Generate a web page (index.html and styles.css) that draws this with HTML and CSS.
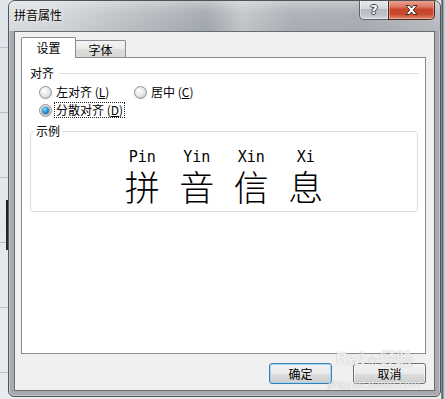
FILE: index.html
```html
<!DOCTYPE html>
<html lang="zh-CN">
<head>
<meta charset="utf-8">
<title>拼音属性</title>
<link rel="stylesheet" href="styles.css">
</head>
<body>
<div class="desk">
  <div class="win">
    <div class="titlebar">
      <span class="title">拼音属性</span>
      <div class="caption">
        <div class="cap-btn help"><span>?</span></div>
        <div class="cap-btn close">
          <svg width="13" height="10" viewBox="0 0 13 10"><path d="M1 0.5 H4.5 L6.5 3 L8.5 0.5 H12 L8.3 5 L12 9.5 H8.5 L6.5 7 L4.5 9.5 H1 L4.7 5 Z" fill="#fff" stroke="#3b2a26" stroke-width="1" stroke-linejoin="round"/></svg>
        </div>
      </div>
    </div>
    <div class="client">
      <div class="tabs">
        <div class="tab active">设置</div>
        <div class="tab">字体</div>
      </div>
      <div class="panel">
        <div class="group-head"><span>对齐</span><span class="rule"></span></div>
        <div class="radios">
          <div class="row">
            <div class="radio first"><span class="circle"></span><span class="lbl">左对齐 (<u>L</u>)</span></div>
            <div class="radio"><span class="circle"></span><span class="lbl">居中 (<u>C</u>)</span></div>
          </div>
          <div class="row">
            <div class="radio"><span class="circle checked"></span><span class="lbl focus">分散对齐 (<u>D</u>)</span></div>
          </div>
        </div>
        <fieldset class="example">
          <legend>示例</legend>
          <div class="sample">
            <div class="col"><span class="py">Pin</span><span class="hz">拼</span></div>
            <div class="col"><span class="py">Yin</span><span class="hz">音</span></div>
            <div class="col"><span class="py">Xin</span><span class="hz">信</span></div>
            <div class="col"><span class="py">Xi</span><span class="hz">息</span></div>
          </div>
        </fieldset>
      </div>
      <div class="buttons">
        <div class="btn ok">确定</div>
        <div class="btn cancel">取消</div>
      </div>
    </div>
  </div>
  <div class="watermark">
    <span class="wm-big">Bai<span class="paw">❀</span>经验</span>
    <span class="wm-small">jingyan.baidu.com</span>
  </div>
</div>
</body>
</html>
```
FILE: styles.css
```css
* { box-sizing: border-box; }
html, body { margin: 0; padding: 0; }
body {
  width: 446px;
  height: 399px;
  overflow: hidden;
  font-family: "Noto Sans CJK SC", "Microsoft YaHei", sans-serif;
  font-size: 12px;
  color: #000;
  background: #e6e9ed;
}
.desk {
  position: relative;
  width: 446px;
  height: 399px;
  display: flex;
  padding-left: 8px;
  background:
    linear-gradient(#1e1e1e, #2a2a2a) no-repeat 6px 200px / 2px 50px,
    linear-gradient(to right, #9a9ea3, #5b6066 30%, #c4c8cc 60%, #d8dbdf) no-repeat 441px 0 / 5px 399px,
    repeating-linear-gradient(to bottom, transparent 0 47px, #b7c0ca 47px 48px, transparent 48px 65px),
    linear-gradient(to bottom, #dfe4ea, #e9ebee);
}
.win {
  width: 433px;
  height: 397px;
  border: 1px solid #4f5459;
  border-radius: 7px 7px 6px 6px;
  background: #a6aaaf;
  box-shadow: inset 1px 0 0 #c6c9cc, inset -1px 0 0 #c6c9cc, inset 0 -1px 0 #c6c9cc;
  display: flex;
  flex-direction: column;
  padding: 0 5px 5px;
  overflow: hidden;
}
.titlebar {
  height: 30px;
  margin: 0 -5px;
  padding: 0 5px;
  display: flex;
  justify-content: space-between;
  align-items: flex-start;
  background:
    linear-gradient(to bottom, rgba(255,255,255,0.35), rgba(255,255,255,0.05) 40%, rgba(0,0,0,0.02)),
    linear-gradient(to right, #dadde0 0%, #d2d5d9 12%, #b9bec3 30%, #a3a9b0 46%, #c3c7cb 54%, #aab0b6 66%, #a7adb3 82%, #b9bdc2 100%);
}
.title {
  margin-top: 7px;
  line-height: 14px;
  font-size: 12px;
  color: #000;
  text-shadow: 0 0 6px rgba(255,255,255,0.9), 0 0 2px rgba(255,255,255,0.8);
}
.caption {
  display: flex;
  margin-top: -1px;
  height: 20px;
}
.cap-btn {
  height: 20px;
  display: flex;
  align-items: center;
  justify-content: center;
}
.help {
  width: 29px;
  border: 1px solid #5c6167;
  border-top: none;
  border-right: none;
  border-radius: 0 0 0 5px;
  background: linear-gradient(to bottom, #e9ecee 0%, #d3d7db 45%, #b4bac0 50%, #c0c5ca 80%, #d4d8dc 100%);
  box-shadow: inset 0 0 0 1px rgba(255,255,255,0.45);
}
.help span {
  font-family: "DejaVu Sans", sans-serif;
  font-weight: bold;
  font-size: 13px;
  line-height: 14px;
  color: #fff;
  text-shadow: 1px 0 0 #3c4248, -1px 0 0 #3c4248, 0 1px 0 #3c4248, 0 -1px 0 #3c4248;
}
.close {
  width: 47px;
  border: 1px solid #4e2c25;
  border-top: none;
  border-radius: 0 0 5px 0;
  background: linear-gradient(to bottom, #eaa898 0%, #dc7a62 35%, #c8452a 50%, #c9492c 75%, #e28a6f 100%);
  box-shadow: inset 0 0 0 1px rgba(255,220,210,0.4);
}
.close svg { display: block; }

.client {
  flex: 1;
  border: 1px solid #686d72;
  background: #f0f0f0;
  padding: 5px 8px 0 6px;
  display: flex;
  flex-direction: column;
}
.tabs {
  display: flex;
  align-items: flex-end;
  height: 20px;
  position: relative;
  z-index: 1;
}
.tab {
  width: 50px;
  height: 17px;
  border: 1px solid #898c95;
  border-left: none;
  border-bottom: none;
  border-radius: 0 2px 0 0;
  background: linear-gradient(to bottom, #f3f3f3 0%, #ebebeb 50%, #dddddd 51%, #d6d6d6 100%);
  text-align: center;
  padding-top: 1px;
  line-height: 16px;
}
.tab.active {
  width: 55px;
  height: 21px;
  border-left: 1px solid #898c95;
  border-radius: 2px 2px 0 0;
  background: #fff;
  margin-bottom: -1px;
  padding-top: 0;
  line-height: 20px;
}
.panel {
  height: 297px;
  border: 1px solid #898c95;
  background: #fff;
  padding: 8px 6px 0 8px;
}
.group-head {
  display: flex;
  align-items: center;
  height: 14px;
  line-height: 14px;
}
.rule {
  flex: 1;
  height: 1px;
  margin-left: 5px;
  background: #d5dfe5;
}
.radios {
  margin-top: 3px;
  padding-left: 9px;
}
.row {
  display: flex;
  align-items: center;
  height: 18px;
}
.radio {
  display: flex;
  align-items: center;
}
.radio.first { width: 95px; }
.circle {
  width: 13px;
  height: 13px;
  border-radius: 50%;
  border: 1px solid #8e8f8f;
  background: radial-gradient(circle at 40% 35%, #ffffff 0%, #f0f0f0 35%, #d2d2d2 75%, #c6c6c6 100%);
  display: flex;
  align-items: center;
  justify-content: center;
  flex: none;
}
.circle.checked::after {
  content: "";
  width: 7px;
  height: 7px;
  border-radius: 50%;
  background: radial-gradient(circle at 40% 35%, #9fe0ff 0%, #2e9bdc 40%, #0a4f8e 100%);
  box-shadow: 0 0 0 1px rgba(20,60,110,0.35);
}
.lbl {
  margin-left: 2px;
  border: 1px dotted transparent;
  padding: 0 1px;
  line-height: 14px;
}
.lbl.focus { border-color: #222; }
.lbl u { text-decoration-thickness: 1px; text-underline-offset: 1px; }

.example {
  margin: 5px 1px 0 0;
  border: 1px solid #d5dfe5;
  border-radius: 3px;
  padding: 11px 3px 7px;
  min-width: 0;
}
.example legend {
  padding: 0 2px;
  line-height: 14px;
  font-size: 12px;
}
.sample {
  display: flex;
  justify-content: center;
}
.col {
  width: 54.5px;
  display: flex;
  flex-direction: column;
  align-items: center;
}
.py {
  font-family: "DejaVu Sans Mono", monospace;
  font-size: 15px;
  line-height: 16px;
}
.hz {
  margin-top: 3px;
  font-family: "Noto Sans CJK SC", sans-serif;
  font-weight: 300;
  font-size: 35px;
  line-height: 36px;
}
.buttons {
  display: flex;
  justify-content: flex-end;
  gap: 21px;
  margin-top: 9px;
}
.btn {
  height: 21px;
  border: 1px solid #707070;
  border-radius: 3px;
  background: linear-gradient(to bottom, #f2f2f2 0%, #ebebeb 50%, #dddddd 51%, #cfcfcf 100%);
  box-shadow: inset 0 0 0 1px rgba(255,255,255,0.6);
  text-align: center;
  line-height: 19px;
}
.btn.ok {
  width: 63px;
  border-color: #3c7fb1;
  box-shadow: inset 0 0 0 1px #9fd7f5;
}
.btn.cancel { width: 73px; }

.watermark {
  position: absolute;
  left: 328px;
  top: 349px;
  width: 92px;
  display: flex;
  flex-direction: column;
  align-items: center;
  pointer-events: none;
  color: rgba(255,255,255,0.8);
  text-shadow: 0 0 1px rgba(110,110,110,0.5);
}
.wm-big {
  font-family: "DejaVu Sans", sans-serif;
  font-weight: bold;
  font-size: 17px;
  line-height: 20px;
}
.paw { font-size: 13px; margin: 0 1px; }
.wm-small {
  font-family: "DejaVu Sans", sans-serif;
  font-size: 10px;
  line-height: 12px;
  margin-top: 8px;
  color: rgba(255,255,255,0.75);
}
```
